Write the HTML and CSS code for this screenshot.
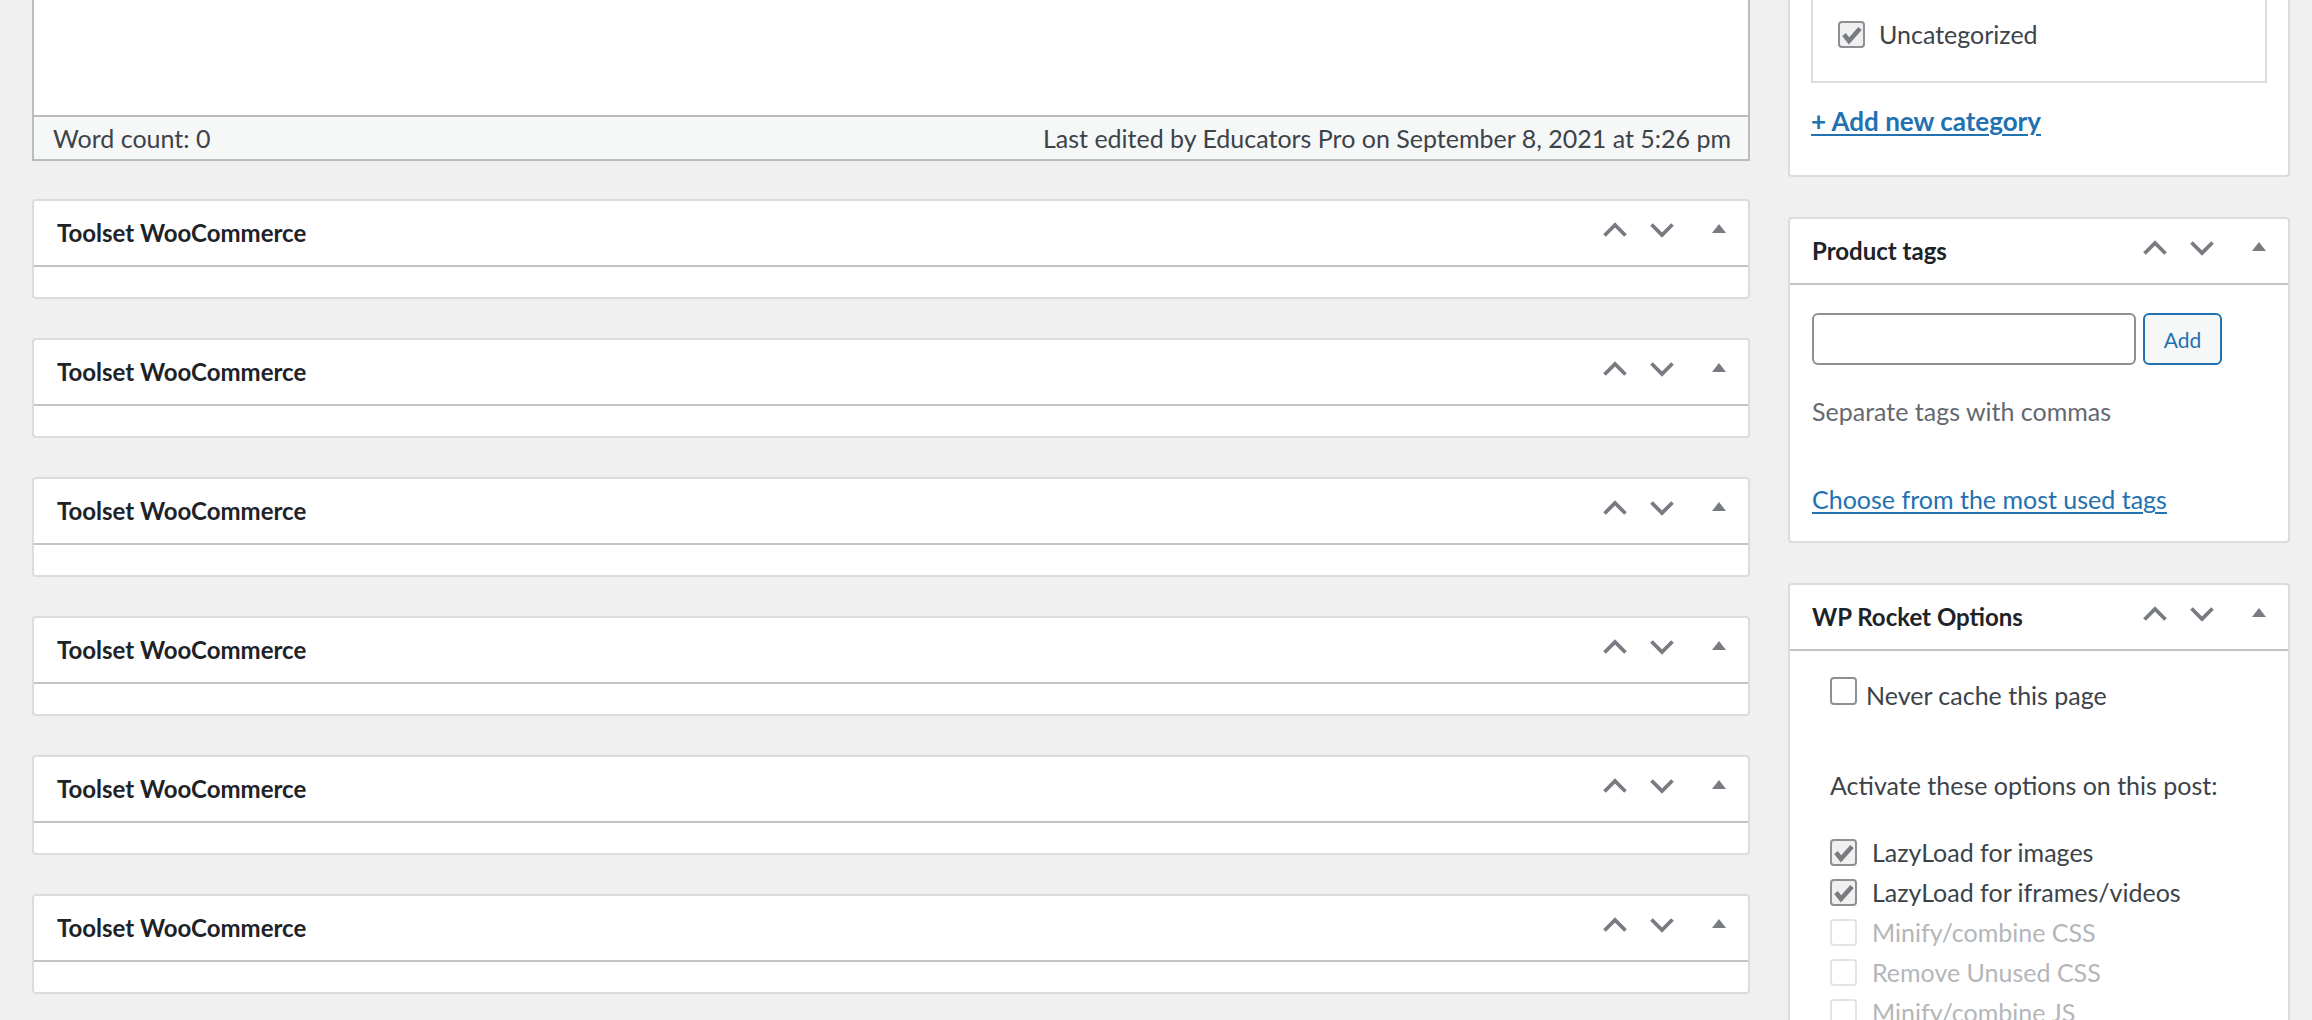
FILE: index.html
```html
<!DOCTYPE html>
<html lang="en">

<head>
    <meta charset="UTF-8">
    <title>Edit product</title>
    <link rel="stylesheet" href="styles.css">
</head>

<body>
    <div class="wrap">
        <div class="main">
            <div class="editor">
                <div class="editor-area"></div>
                <div class="status">
                    <span>Word count: 0</span>
                    <span>Last edited by Educators Pro on September 8, 2021 at 5:26 pm</span>
                </div>
            </div>

            <div class="postbox">
                <div class="postbox-header">
                    <h2>Toolset WooCommerce</h2>
                    <div class="handle-actions">
                        <svg class="chev" viewBox="0 0 24 14"><path d="M1.5 12.5L12 2l10.5 10.5"/></svg>
                        <svg class="chev" viewBox="0 0 24 14"><path d="M1.5 1.5L12 12 22.5 1.5"/></svg>
                        <svg class="toggle" viewBox="0 0 14 9"><path d="M0 9L7 0l7 9z"/></svg>
                    </div>
                </div>
                <div class="inside"></div>
            </div>
            <div class="postbox">
                <div class="postbox-header">
                    <h2>Toolset WooCommerce</h2>
                    <div class="handle-actions">
                        <svg class="chev" viewBox="0 0 24 14"><path d="M1.5 12.5L12 2l10.5 10.5"/></svg>
                        <svg class="chev" viewBox="0 0 24 14"><path d="M1.5 1.5L12 12 22.5 1.5"/></svg>
                        <svg class="toggle" viewBox="0 0 14 9"><path d="M0 9L7 0l7 9z"/></svg>
                    </div>
                </div>
                <div class="inside"></div>
            </div>
            <div class="postbox">
                <div class="postbox-header">
                    <h2>Toolset WooCommerce</h2>
                    <div class="handle-actions">
                        <svg class="chev" viewBox="0 0 24 14"><path d="M1.5 12.5L12 2l10.5 10.5"/></svg>
                        <svg class="chev" viewBox="0 0 24 14"><path d="M1.5 1.5L12 12 22.5 1.5"/></svg>
                        <svg class="toggle" viewBox="0 0 14 9"><path d="M0 9L7 0l7 9z"/></svg>
                    </div>
                </div>
                <div class="inside"></div>
            </div>
            <div class="postbox">
                <div class="postbox-header">
                    <h2>Toolset WooCommerce</h2>
                    <div class="handle-actions">
                        <svg class="chev" viewBox="0 0 24 14"><path d="M1.5 12.5L12 2l10.5 10.5"/></svg>
                        <svg class="chev" viewBox="0 0 24 14"><path d="M1.5 1.5L12 12 22.5 1.5"/></svg>
                        <svg class="toggle" viewBox="0 0 14 9"><path d="M0 9L7 0l7 9z"/></svg>
                    </div>
                </div>
                <div class="inside"></div>
            </div>
            <div class="postbox">
                <div class="postbox-header">
                    <h2>Toolset WooCommerce</h2>
                    <div class="handle-actions">
                        <svg class="chev" viewBox="0 0 24 14"><path d="M1.5 12.5L12 2l10.5 10.5"/></svg>
                        <svg class="chev" viewBox="0 0 24 14"><path d="M1.5 1.5L12 12 22.5 1.5"/></svg>
                        <svg class="toggle" viewBox="0 0 14 9"><path d="M0 9L7 0l7 9z"/></svg>
                    </div>
                </div>
                <div class="inside"></div>
            </div>
            <div class="postbox">
                <div class="postbox-header">
                    <h2>Toolset WooCommerce</h2>
                    <div class="handle-actions">
                        <svg class="chev" viewBox="0 0 24 14"><path d="M1.5 12.5L12 2l10.5 10.5"/></svg>
                        <svg class="chev" viewBox="0 0 24 14"><path d="M1.5 1.5L12 12 22.5 1.5"/></svg>
                        <svg class="toggle" viewBox="0 0 14 9"><path d="M0 9L7 0l7 9z"/></svg>
                    </div>
                </div>
                <div class="inside"></div>
            </div>
        </div>

        <div class="side">
            <div class="postbox cut">
                <div class="cat-list">
                    <label class="check-row">
                        <span class="cb checked"><svg viewBox="2 2 23 23"><path d="M6 13.5l5 6.5L22 7.5"/></svg></span>
                        <span class="cat-name">Uncategorized</span>
                    </label>
                </div>
                <a class="add-cat" href="#">+ Add new category</a>
            </div>

            <div class="postbox">
                <div class="postbox-header">
                    <h2>Product tags</h2>
                    <div class="handle-actions">
                        <svg class="chev" viewBox="0 0 24 14"><path d="M1.5 12.5L12 2l10.5 10.5"/></svg>
                        <svg class="chev" viewBox="0 0 24 14"><path d="M1.5 1.5L12 12 22.5 1.5"/></svg>
                        <svg class="toggle" viewBox="0 0 14 9"><path d="M0 9L7 0l7 9z"/></svg>
                    </div>
                </div>
                <div class="tags-inside">
                    <div class="tag-row">
                        <input type="text" class="tag-input">
                        <button class="button">Add</button>
                    </div>
                    <p class="howto">Separate tags with commas</p>
                    <a class="tag-cloud" href="#">Choose from the most used tags</a>
                </div>
            </div>

            <div class="postbox">
                <div class="postbox-header">
                    <h2>WP Rocket Options</h2>
                    <div class="handle-actions">
                        <svg class="chev" viewBox="0 0 24 14"><path d="M1.5 12.5L12 2l10.5 10.5"/></svg>
                        <svg class="chev" viewBox="0 0 24 14"><path d="M1.5 1.5L12 12 22.5 1.5"/></svg>
                        <svg class="toggle" viewBox="0 0 14 9"><path d="M0 9L7 0l7 9z"/></svg>
                    </div>
                </div>
                <div class="rocket-inside">
                    <label class="never-row">
                        <span class="cb"></span>
                        <span>Never cache this page</span>
                    </label>
                    <p class="activate">Activate these options on this post:</p>
                    <div class="options">
                        <label class="opt">
                            <span class="cb checked"><svg viewBox="2 2 23 23"><path d="M6 13.5l5 6.5L22 7.5"/></svg></span>
                            <span>LazyLoad for images</span>
                        </label>
                        <label class="opt">
                            <span class="cb checked"><svg viewBox="2 2 23 23"><path d="M6 13.5l5 6.5L22 7.5"/></svg></span>
                            <span>LazyLoad for iframes/videos</span>
                        </label>
                        <label class="opt disabled">
                            <span class="cb"></span>
                            <span>Minify/combine CSS</span>
                        </label>
                        <label class="opt disabled">
                            <span class="cb"></span>
                            <span>Remove Unused CSS</span>
                        </label>
                        <label class="opt disabled">
                            <span class="cb"></span>
                            <span>Minify/combine JS</span>
                        </label>
                    </div>
                </div>
            </div>
        </div>
    </div>
</body>

</html>
```
FILE: styles.css
```css
html,
body {
    height: 1020px;
    overflow: hidden;
}

body {
    margin: 0;
    background: #f0f0f1;
    font-family: Lato, "Noto Sans", sans-serif;
    font-size: 25px;
    line-height: 35px;
    color: #3c434a;
}

a {
    color: #2271b1;
    text-decoration-thickness: 2px;
    text-underline-offset: 3px;
}

.wrap {
    display: flex;
    gap: 38px;
    padding: 0 22px 0 32px;
}

.main {
    flex: 1;
    display: flex;
    flex-direction: column;
    gap: 39px;
}

.side {
    width: 502px;
    display: flex;
    flex-direction: column;
    gap: 40px;
}

/* editor */

.editor {
    border-left: 2px solid #bbbcbf;
    border-right: 2px solid #bbbcbf;
    margin-bottom: -1px;
}

.editor-area {
    height: 115px;
    background: #fff;
}

.status {
    height: 42px;
    display: flex;
    justify-content: space-between;
    align-items: center;
    padding: 0 17px 0 19px;
    background: #f6f7f7;
    border-top: 2px solid #bbbcbf;
    border-bottom: 2px solid #bbbcbf;
}

/* boxes */

.postbox {
    background: #fff;
    border: 2px solid #dcdcde;
    border-radius: 4px;
}

.postbox-header {
    height: 64px;
    display: flex;
    align-items: center;
    padding: 0 22px 0 23px;
    border-bottom: 2px solid #c3c4c7;
}

.side .postbox-header {
    padding-left: 22px;
}

.postbox-header h2 {
    flex: 1;
    margin: 0 0 2px;
    font-size: 24px;
    font-weight: 700;
    color: #1d2327;
}

.handle-actions {
    display: flex;
    align-items: center;
    margin-bottom: 6px;
}

.chev {
    width: 24px;
    height: 14px;
    overflow: visible;
    fill: none;
    stroke: #787c82;
    stroke-width: 3.8;
}

.chev + .chev {
    margin-left: 23px;
}

.toggle {
    width: 14px;
    height: 9px;
    margin: 0 0 3px 38px;
    fill: #787c82;
}

.inside {
    height: 30px;
}

/* categories */

.cut {
    border-top: 0;
    border-radius: 0 0 4px 4px;
    padding: 0 21px 36px 21px;
}

.cat-list {
    height: 60px;
    padding: 21px 0 0 25px;
    border: 2px solid #dcdcde;
    border-top: 0;
}

.check-row {
    display: flex;
    align-items: center;
    height: 27px;
}

.cat-name {
    margin-left: 14px;
}

.add-cat {
    display: inline-block;
    margin-top: 21px;
    font-size: 26px;
    font-weight: 700;
}

/* checkboxes */

.cb {
    flex: none;
    box-sizing: border-box;
    width: 27px;
    height: 27px;
    border: 2px solid #8c8f94;
    border-radius: 4px;
    background: #fff;
}

.cb.checked {
    background: #f0f0f1;
}

.cb svg {
    display: block;
    width: 23px;
    height: 23px;
    fill: none;
    stroke: #787c82;
    stroke-width: 4.6;
}

/* tags */

.tags-inside {
    padding: 28px 22px 24px 22px;
}

.tag-row {
    display: flex;
    gap: 7px;
}

.tag-input {
    box-sizing: border-box;
    width: 324px;
    height: 52px;
    border: 2px solid #8c8f94;
    border-radius: 6px;
    background: #fff;
}

.button {
    box-sizing: border-box;
    width: 79px;
    height: 52px;
    border: 2px solid #2271b1;
    border-radius: 6px;
    background: #f6f7f7;
    color: #2271b1;
    font-family: Lato, sans-serif;
    font-size: 21px;
}

.howto {
    margin: 29px 0 0;
    color: #646970;
}

.tag-cloud {
    display: inline-block;
    margin-top: 53px;
}

/* wp rocket */

.rocket-inside {
    padding: 27px 22px 0 40px;
}

.never-row {
    display: flex;
    align-items: flex-start;
}

.never-row .cb {
    height: 28px;
    margin: -1px 9px 0 0;
}

.activate {
    margin: 55px 0 0;
}

.options {
    margin-top: 29px;
}

.opt {
    display: flex;
    align-items: center;
    height: 40px;
}

.opt .cb {
    margin-right: 15px;
}

.opt.disabled {
    color: #b4b6b9;
}

.opt.disabled .cb {
    border-color: #e2e3e5;
}
```
